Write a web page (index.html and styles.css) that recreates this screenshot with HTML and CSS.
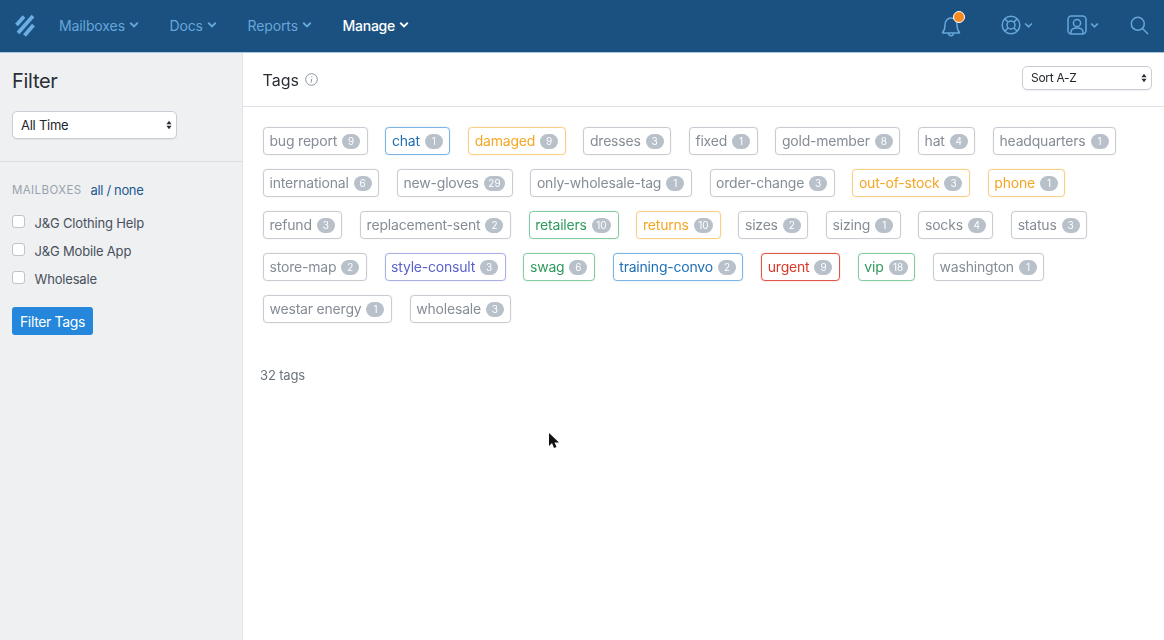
FILE: index.html
```html
<!DOCTYPE html>
<html lang="en">
<head>
<meta charset="utf-8">
<title>Tags</title>
<link rel="stylesheet" href="styles.css">
</head>
<body>
<header class="topbar">
  <svg class="logo" width="22" height="24" viewBox="0 0 22 24"><g fill="none" stroke="#6aaee3" stroke-width="3.800"><path d="M2.500 12 10 3.500"/><path d="M4 20 19 3"/><path d="M10.500 22.500 19.500 12"/></g></svg>
  <nav class="nav">
    <a class="nav-item">Mailboxes <svg class="chev" viewBox="0 0 8 6"><path d="M1 1.200 4 4.200 7 1.200"/></svg></a>
    <a class="nav-item">Docs <svg class="chev" viewBox="0 0 8 6"><path d="M1 1.200 4 4.200 7 1.200"/></svg></a>
    <a class="nav-item">Reports <svg class="chev" viewBox="0 0 8 6"><path d="M1 1.200 4 4.200 7 1.200"/></svg></a>
    <a class="nav-item active">Manage <svg class="chev" viewBox="0 0 8 6"><path d="M1 1.200 4 4.200 7 1.200"/></svg></a>
  </nav>
  <div class="tools">
    <span class="tool bell">
      <svg width="20" height="24" viewBox="0 0 20 24" class="ico"><path d="M1.500 19.500c1.500-1.500 2.500-3.500 2.500-7.500 0-4 2.500-7 6-7s6 3 6 7c0 4 1 6 2.500 7.500a.5.500 0 0 1-.5.500H2a.5.500 0 0 1-.5-.500z"/><path d="M7.500 20c0 3.500 5 3.500 5 0"/></svg>
      <i class="dot"></i>
    </span>
    <span class="tool help">
      <svg width="20" height="20" viewBox="0 0 20 20" class="ico"><circle cx="10" cy="10" r="8.800"/><circle cx="10" cy="10" r="4"/><path d="M3.800 3.800 7.200 7.200M16.200 3.800 12.800 7.200M3.800 16.200 7.200 12.800M16.200 16.200 12.800 12.800"/></svg>
      <svg class="chev" viewBox="0 0 8 6"><path d="M1 1.200 4 4.200 7 1.200"/></svg>
    </span>
    <span class="tool user">
      <svg width="20" height="20" viewBox="0 0 20 20" class="ico"><rect x="1" y="1" width="18" height="18" rx="3.500"/><circle cx="10" cy="8" r="3.600"/><path d="M4 19v-2c0-3 3-4 6-4s6 1 6 4v2"/></svg>
      <svg class="chev" viewBox="0 0 8 6"><path d="M1 1.200 4 4.200 7 1.200"/></svg>
    </span>
    <svg width="19" height="19" viewBox="0 0 19 19" class="ico search"><circle cx="7.800" cy="7.800" r="6.500"/><path d="M12.500 12.500 18 18"/></svg>
  </div>
</header>
<div class="page">
  <aside class="sidebar">
    <div class="side-top">
      <h2 class="filter-title">Filter</h2>
      <div class="select time-select"><span>All Time</span><svg class="updown" width="6" height="12" viewBox="0 0 7 12"><path d="M3.500 1 6.500 5H.5zM3.500 11 .5 7h6z"/></svg></div>
    </div>
    <div class="side-body">
      <div class="mb-head"><span class="mb-label">MAILBOXES</span><span class="mb-links"><a>all</a> / <a>none</a></span></div>
      <label class="check"><i class="box"></i>J&amp;G Clothing Help</label>
      <label class="check"><i class="box"></i>J&amp;G Mobile App</label>
      <label class="check"><i class="box"></i>Wholesale</label>
      <button class="btn">Filter Tags</button>
    </div>
  </aside>
  <main class="main">
    <div class="main-head">
      <div class="title-wrap"><h1 class="title">Tags</h1>
        <svg width="13" height="13" viewBox="0 0 13 13" class="info"><circle cx="6.500" cy="6.500" r="5.800"/><path d="M6.800 5.800 6.100 9.500M6.900 3.400v.9"/></svg>
      </div>
      <div class="select sort-select"><span>Sort A-Z</span><svg class="updown" width="6" height="12" viewBox="0 0 7 12"><path d="M3.500 1 6.500 5H.5zM3.500 11 .5 7h6z"/></svg></div>
    </div>
    <div class="tags">
      <span class="tag">bug report <b>9</b></span>
      <span class="tag blue">chat <b>1</b></span>
      <span class="tag orange">damaged <b>9</b></span>
      <span class="tag">dresses <b>3</b></span>
      <span class="tag">fixed <b>1</b></span>
      <span class="tag">gold-member <b>8</b></span>
      <span class="tag">hat <b>4</b></span>
      <span class="tag">headquarters <b>1</b></span>
      <span class="tag">international <b>6</b></span>
      <span class="tag">new-gloves <b>29</b></span>
      <span class="tag">only-wholesale-tag <b>1</b></span>
      <span class="tag">order-change <b>3</b></span>
      <span class="tag orange">out-of-stock <b>3</b></span>
      <span class="tag orange">phone <b>1</b></span>
      <span class="tag">refund <b>3</b></span>
      <span class="tag">replacement-sent <b>2</b></span>
      <span class="tag green">retailers <b>10</b></span>
      <span class="tag orange">returns <b>10</b></span>
      <span class="tag">sizes <b>2</b></span>
      <span class="tag">sizing <b>1</b></span>
      <span class="tag">socks <b>4</b></span>
      <span class="tag">status <b>3</b></span>
      <span class="tag">store-map <b>2</b></span>
      <span class="tag purple">style-consult <b>3</b></span>
      <span class="tag green">swag <b>6</b></span>
      <span class="tag blue">training-convo <b>2</b></span>
      <span class="tag red">urgent <b>9</b></span>
      <span class="tag green">vip <b>18</b></span>
      <span class="tag">washington <b>1</b></span>
      <span class="tag">westar energy <b>1</b></span>
      <span class="tag">wholesale <b>3</b></span>
    </div>
    <p class="count">32 tags</p>
    <svg class="cursor" width="12" height="18" viewBox="0 0 12 18"><path d="M1 1v13l3-3 2 5 2.500-1-2-4.500H11z" fill="#111"/></svg>
  </main>
</div>
</body>
</html>
```
FILE: styles.css
```css
* { box-sizing: border-box; }
html, body { margin: 0; height: 100%; }
body { font-family: Inter, "Liberation Sans", sans-serif; color: #3f4a54; background: #fff; overflow: hidden; filter: blur(.4px); }
.topbar { height: 53px; background: #1a5181; border-bottom: 1px solid #a9c6de; display: flex; align-items: center; padding: 0 14px 2px; }
.logo { flex: none; }
.nav { display: flex; margin-left: 23px; gap: 30.500px; }
.nav-item { font-size: 14px; color: #66a6da; display: flex; align-items: center; gap: 4px; letter-spacing: -0.1px; }
.nav-item .chev { width: 10px; height: 8px; }
.nav-item.active { color: #fff; font-weight: 500; letter-spacing: -0.25px; }
.chev { width: 9px; height: 7px; fill: none; stroke: currentColor; stroke-width: 1.500; }
.tools { margin-left: auto; display: flex; align-items: center; color: #66a6da; }
.tool { display: flex; align-items: center; gap: 3px; }
.ico { fill: none; stroke: #66a6da; stroke-width: 1.500; display: block; }
.bell { position: relative; margin-right: 40px; }
.dot { position: absolute; top: -2px; right: -4px; width: 12px; height: 12px; border-radius: 50%; background: #f58a23; border: 1.500px solid #fff; }
.help { margin-right: 34px; }
.user { margin-right: 31px; }
.search { margin-right: 1px; }
.page { display: flex; height: 587px; }
.sidebar { width: 243px; flex: none; background: #eff0f2; border-right: 1px solid #dfe2e6; }
.side-top { padding: 17px 12px 22px; border-bottom: 1px solid #d9dce0; height: 109px; }
.filter-title { margin: 0 0 18px; font-size: 20px; font-weight: 400; color: #2a2f35; line-height: 23px; letter-spacing: -.3px; }
.select { background: #fff; border: 1px solid #c9ced6; border-radius: 5px; display: flex; align-items: center; justify-content: space-between; color: #22272c; box-shadow: 0 1px 1px rgba(0,0,0,.06); }
.time-select { width: 165px; height: 28px; padding: 0 4px 0 8px; font-size: 13px; letter-spacing: -.25px; }
.sort-select { width: 130px; height: 24px; padding: 0 4px 0 8px; font-size: 12px; margin-bottom: 4px; letter-spacing: -.3px; }
.updown { fill: #2b3036; }
.side-body { padding: 20px 12px; }
.mb-head { font-size: 12px; display: flex; gap: 9px; align-items: center; height: 16px; margin-bottom: 11px; }
.mb-label { color: #98a2ad; letter-spacing: .4px; font-size: 11.500px; }
.mb-links { font-size: 13px; color: #1e5a90; letter-spacing: -.35px; }
.check { display: flex; align-items: center; height: 28px; font-size: 13px; color: #47515b; letter-spacing: -.17px; }
.box { width: 13px; height: 13px; background: #fff; border: 1px solid #bfc4cb; border-radius: 3px; margin-right: 9.500px; margin-top: -4px; }
.btn { display: block; margin-top: 14px; background: #2487dc; color: #fff; border: 0; border-radius: 3px; height: 28px; width: 81px; padding: 0; font: 14px Inter, "Liberation Sans", sans-serif; letter-spacing: -.35px; }
.main { flex: 1; position: relative; min-width: 0; }
.main-head { height: 54px; border-bottom: 1px solid #dfe2e6; display: flex; align-items: center; justify-content: space-between; padding: 0 12px 0 19.500px; }
.title-wrap { display: flex; align-items: center; gap: 6px; }
.title { margin: 0; font-size: 16px; font-weight: 400; color: #2a2f35; }
.info { fill: none; stroke: #8d949d; stroke-width: 1; }
.tags { display: flex; flex-wrap: wrap; gap: 14px 17.800px; padding: 20px 12px 0 20px; }
.tag { height: 28px; border: 1px solid #c9ccd3; border-radius: 4px; padding: 0 6.500px 2px 5.500px; font-size: 14px; color: #858d96; display: inline-flex; align-items: center; gap: 5px; white-space: nowrap; letter-spacing: -0.2px; box-shadow: 0 0 1px #c9ccd3; }
.tag b { font-weight: 400; font-size: 10px; color: #fff; background: #b8c0c9; border-radius: 8px; height: 15px; min-width: 18px; padding: 0 4.500px; margin-top: 2px; display: flex; align-items: center; justify-content: center; letter-spacing: 0; }
.tag.blue { color: #1f6fb5; border-color: #7cb5e3; box-shadow: 0 0 1px #7cb5e3; }
.tag.orange { color: #f5a623; border-color: #f9cf85; box-shadow: 0 0 1px #f9cf85; }
.tag.green { color: #2f9a5d; border-color: #84cda2; box-shadow: 0 0 1px #84cda2; }
.tag.purple { color: #5a63c8; border-color: #aab0e4; box-shadow: 0 0 1px #aab0e4; }
.tag.red { color: #d9382b; border-color: #e2564a; box-shadow: 0 0 1px #e2564a; }
.count { margin: 44px 0 0 17px; font-size: 13px; color: #6a737c; line-height: 16px; letter-spacing: -.15px; }
.cursor { position: absolute; left: 305px; top: 379px; }
```
